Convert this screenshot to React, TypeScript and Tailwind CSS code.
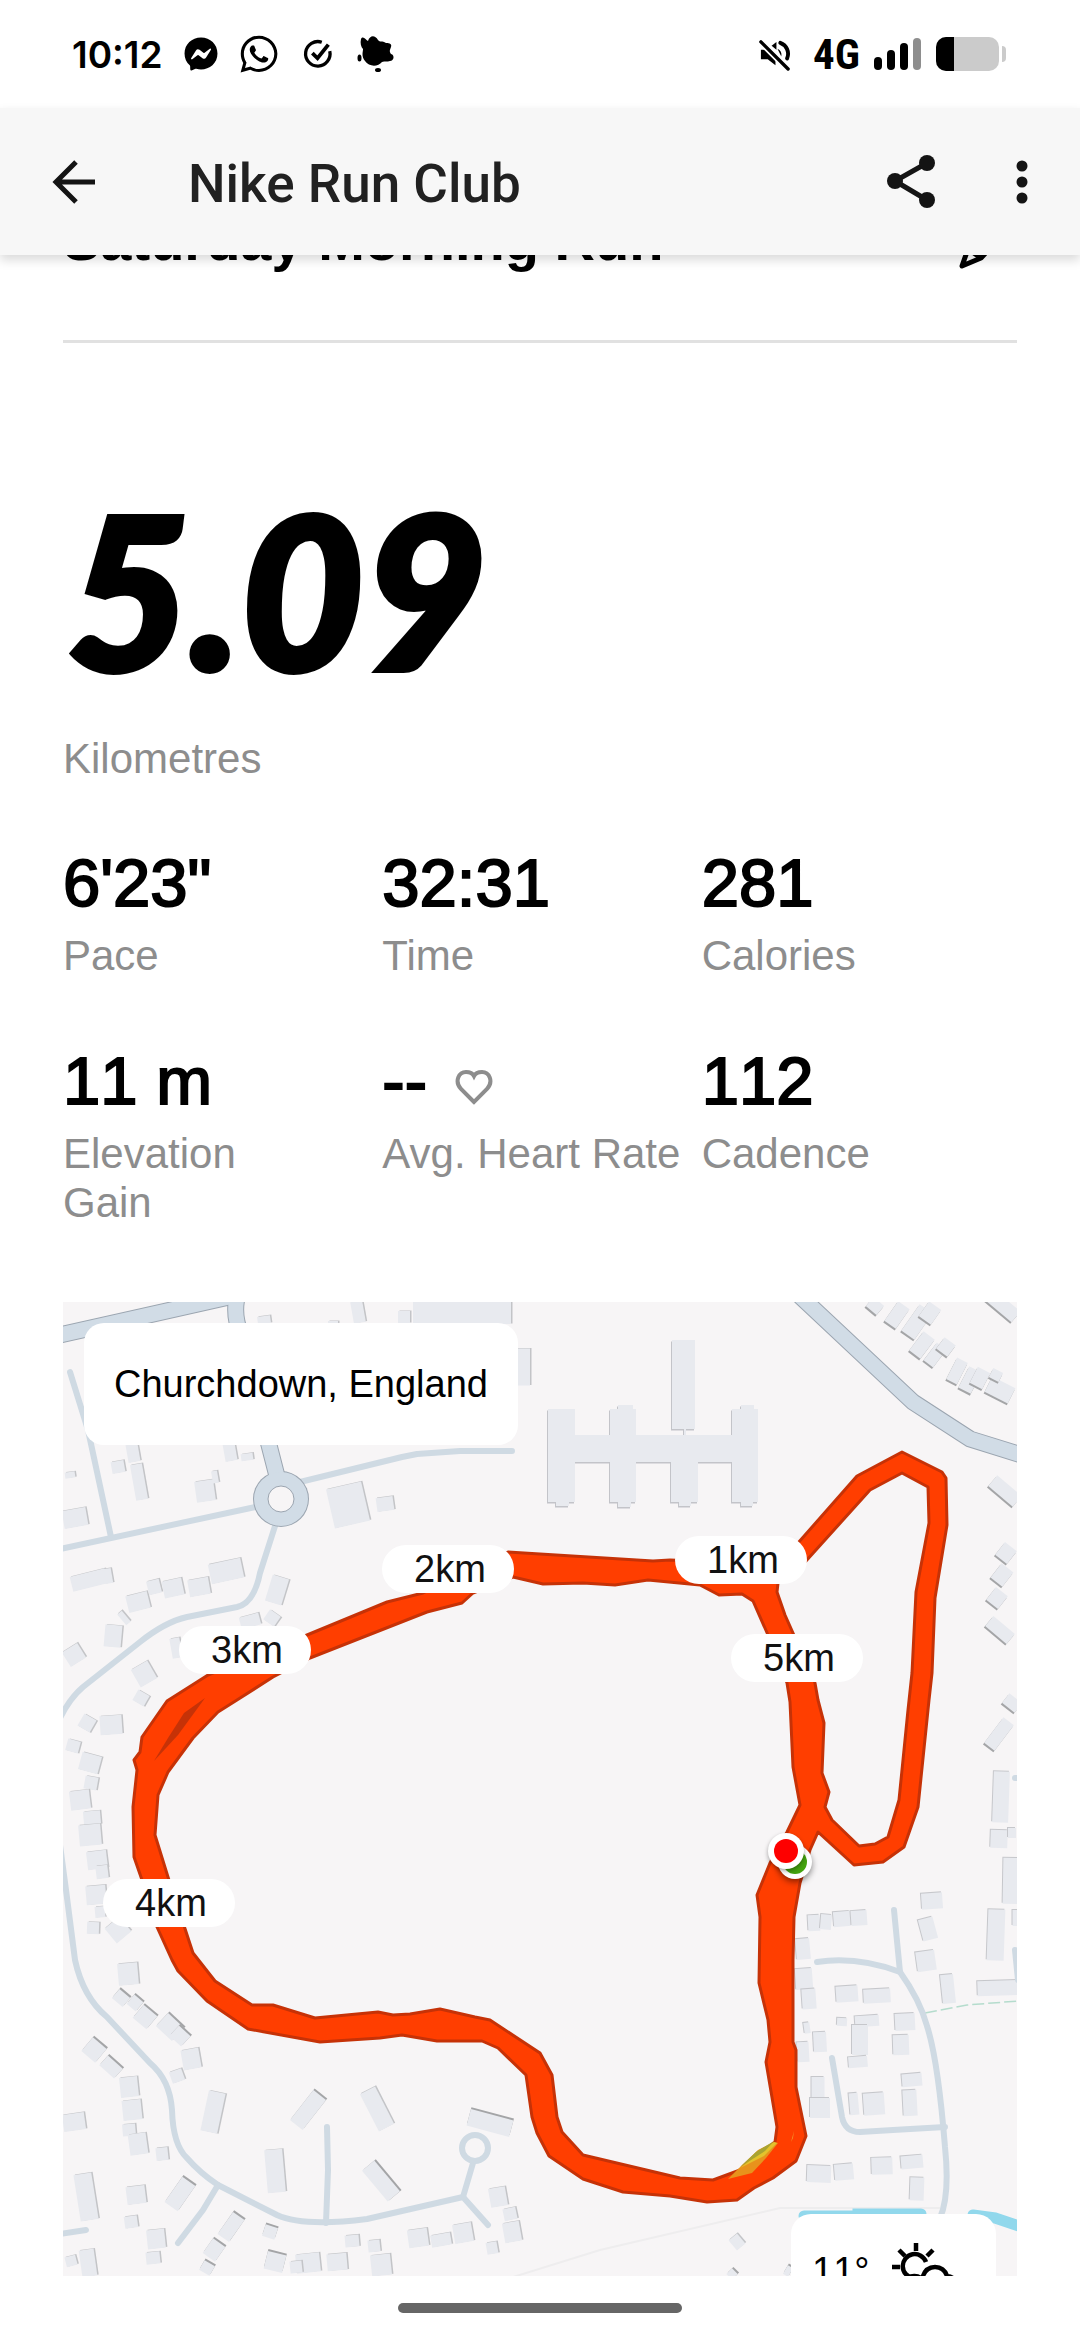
import React from "react";
import { FaFacebookMessenger, FaWhatsapp } from "react-icons/fa";

// x, y (centre), width, height, rotation
type Building = [number, number, number, number, number];

interface Stat {
  value: string;
  label: string;
  heart?: boolean;
  nowrap?: boolean;
}

const stats: Stat[] = [
  { value: "6'23\"", label: "Pace" },
  { value: "32:31", label: "Time" },
  { value: "281", label: "Calories" },
  { value: "11 m", label: "Elevation Gain" },
  { value: "--", label: "Avg. Heart Rate", heart: true, nowrap: true },
  { value: "112", label: "Cadence" },
];

// The map drawing uses this window of world coordinates
const MAP = { x: 63, y: 1302, width: 954, height: 974 };

const splits = [
  { label: "1km", x: 741, y: 1560 },
  { label: "2km", x: 448, y: 1569 },
  { label: "3km", x: 245, y: 1650 },
  { label: "4km", x: 169, y: 1903 },
  { label: "5km", x: 797, y: 1658 },
];

const westBuildings: Building[] = [
  [133, 1453, 12, 18, -10], [118, 1467, 13, 12, -10], [139, 1482, 12, 36, -10],
  [230, 1452, 12, 18, -10], [247, 1457, 12, 7, -8], [205, 1491, 19, 21, -8],
  [215, 1477, 6, 12, -10], [75, 1518, 24, 18, -10], [70, 1475, 10, 6, -8],
  [348, 1505, 36, 40, -13], [385, 1504, 17, 14, -8], [89, 1580, 36, 15, -14],
  [108, 1576, 8, 15, -10], [138, 1602, 22, 17, -14], [154, 1587, 13, 14, -14],
  [173, 1588, 20, 17, -12], [199, 1587, 21, 17, -10], [226, 1571, 33, 20, -12],
  [113, 1636, 17, 22, 5], [124, 1618, 6, 14, -40], [74, 1655, 18, 17, -32],
  [144, 1674, 19, 20, -30], [141, 1698, 13, 12, 30], [277, 1590, 17, 27, 17],
  [272, 1618, 13, 12, 35], [250, 1621, 20, 12, -15], [176, 1648, 10, 20, -10],
  [264, 1320, 13, 8, -8], [358, 1312, 12, 22, -10], [404, 1317, 12, 12, 0],
  [333, 1323, 10, 4, 0], [462, 1312, 98, 24, 0], [523, 1367, 14, 37, 0],
  [87, 1723, 14, 14, 30], [111, 1725, 22, 19, -4], [73, 1746, 13, 12, 15],
  [90, 1763, 20, 18, 15], [91, 1783, 13, 13, 10], [80, 1800, 20, 19, -7],
  [92, 1818, 17, 14, -5], [90, 1835, 22, 21, -5], [97, 1860, 20, 18, -7],
  [102, 1872, 12, 13, -7], [96, 1895, 20, 19, -5], [100, 1912, 10, 11, -5],
  [93, 1928, 12, 12, 2], [118, 1930, 19, 19, -40], [128, 1974, 20, 22, -5],
  [129, 2087, 18, 20, -6], [132, 2110, 19, 20, -6], [129, 2130, 13, 12, -5],
  [138, 2144, 18, 21, -8], [162, 2154, 12, 13, -6], [191, 2059, 18, 20, -10],
  [177, 2076, 13, 12, -20], [74, 2122, 22, 17, -8], [213, 2112, 17, 41, 12],
  [377, 2109, 17, 42, -27], [275, 2171, 18, 43, -5], [86, 2197, 18, 47, -9],
  [136, 2195, 19, 18, -7], [131, 2222, 13, 12, -8], [156, 2239, 18, 19, -6],
  [153, 2258, 14, 12, -6], [308, 2263, 24, 19, -6], [296, 2267, 12, 12, -6],
  [337, 2262, 20, 17, -5], [352, 2241, 14, 12, -5], [374, 2246, 12, 12, -6],
  [381, 2265, 20, 21, -6], [418, 2238, 20, 18, -8], [441, 2240, 20, 12, -10],
  [463, 2233, 19, 19, -10], [498, 2197, 17, 19, -10], [510, 2214, 13, 12, -12],
  [512, 2232, 17, 20, -10], [492, 2248, 11, 12, -10], [71, 2261, 11, 10, -15],
  [88, 2263, 15, 27, -8], [737, 2242, 11, 13, -40],
];

// Diagonal roofs, lit from the south west
const slopedBuildings: Building[] = [
  [121, 1998, 14, 12, 40], [135, 2003, 12, 12, 40], [145, 2017, 18, 17, 40],
  [170, 2027, 22, 18, 43], [180, 2036, 16, 14, 43], [94, 2050, 18, 18, 40],
  [111, 2067, 20, 13, 42], [308, 2110, 16, 38, 38], [490, 2123, 44, 17, 15],
  [381, 2181, 40, 16, 50], [180, 2194, 16, 31, 35], [231, 2227, 14, 27, 35],
  [214, 2250, 15, 18, 35], [207, 2268, 12, 11, 30], [270, 2232, 13, 12, 18],
  [275, 2262, 19, 18, 14], [732, 2274, 8, 8, 45], [788, 2271, 6, 10, 30],
];

const eastBuildings: Building[] = [
  [814, 1923, 12, 16, -3], [826, 1922, 11, 15, 5], [842, 1919, 17, 15, -5],
  [859, 1918, 16, 15, -4], [803, 1949, 14, 21, -5], [804, 1979, 17, 21, -4],
  [809, 1999, 14, 20, -4], [847, 1994, 22, 16, -4], [877, 1996, 27, 14, -3],
  [932, 1901, 21, 16, -4], [928, 1929, 15, 22, -15], [926, 1961, 19, 20, -8],
  [948, 1989, 13, 29, -6], [1000, 1988, 45, 15, -2], [996, 1935, 17, 51, 2],
  [1001, 1797, 16, 51, 2], [999, 1839, 17, 18, 2], [1012, 1833, 8, 10, 0],
  [1012, 1881, 18, 46, 1], [1016, 1918, 7, 16, 0], [807, 2028, 6, 11, -8],
  [803, 2052, 12, 20, -3], [820, 2042, 13, 20, -3], [842, 2022, 10, 8, 3],
  [867, 2021, 24, 11, -4], [860, 2040, 16, 30, 0], [858, 2062, 19, 11, -5],
  [905, 2022, 20, 17, -3], [901, 2045, 16, 20, -2], [818, 2090, 13, 26, 0],
  [820, 2108, 20, 20, 0], [854, 2104, 9, 22, -5], [874, 2104, 21, 22, -4],
  [912, 2080, 20, 13, -5], [910, 2103, 14, 26, -3], [819, 2174, 24, 17, 2],
  [844, 2172, 19, 16, -5], [882, 2166, 21, 17, -2], [912, 2162, 22, 13, -5],
  [917, 2189, 14, 23, 2],
];

const northEastBuildings: Building[] = [
  [875, 1306, 14, 12, 40], [897, 1315, 14, 24, 35], [917, 1322, 16, 32, 35],
  [930, 1313, 15, 18, 35], [922, 1345, 14, 24, 37], [935, 1355, 12, 22, 37],
  [946, 1347, 14, 14, 37], [957, 1371, 12, 24, 27], [970, 1380, 14, 24, 27],
  [980, 1378, 14, 18, 27], [1000, 1390, 26, 17, 27], [996, 1375, 11, 10, 27],
  [1003, 1306, 34, 14, 40], [1005, 1491, 32, 14, 40], [1006, 1553, 15, 16, 38],
  [1002, 1575, 15, 18, 38], [997, 1598, 15, 16, 38], [1000, 1630, 28, 13, 40],
  [1012, 1703, 16, 12, 38], [999, 1734, 13, 32, 37],
];

const schoolPath =
  "M548 1409H575V1435H610V1409H618V1405H633V1409H636V1435H684V1429H672V1340H695V1429H686V1435H732V1409H741V1405H754V1409H758V1502H753V1506H741V1502H732V1462H698V1502H691V1506H679V1502H671V1462H636V1502H631V1507H618V1502H610V1462H575V1502H569V1506H556V1502H548Z";

const minorRoads = [
  "M70 1372L88 1430L111 1537",
  "M60 1549L260 1506",
  "M300 1482L402 1457L417 1454L460 1451H512",
  "M276 1523L260 1573Q254 1603 237 1607L187 1617Q165 1622 140 1642L83 1687Q70 1698 60 1718",
  "M60 1845L66 1890L75 1960Q83 1997 107 2017L150 2063Q170 2080 172 2110Q173 2145 187 2158Q200 2173 218 2185L277 2215Q303 2227 367 2219L463 2197L488 2225",
  "M463 2197L473 2163",
  "M327 2127L328 2170L326 2223",
  "M218 2185L203 2210L178 2243",
  "M60 2234L86 2230",
  "M894 1910L900 1972",
  "M817 1962Q857 1956 900 1972Q920 2000 927 2026Q938 2060 945 2147Q950 2195 940 2218",
  "M832 2058L842 2117Q845 2132 860 2132L893 2130L945 2127",
  "M1015 1950L1018 1980",
  "M1015 1778H1020",
];

const majorRoads = [
  "M55 1336L238 1295",
  "M237 1298Q233 1315 241 1335L269 1445L278 1480",
  "M800 1296L913 1402L970 1439L1025 1456",
];

const routeOuter =
  "M508 1552L540 1554L653 1561L670 1560L720 1562L780 1563L798 1543L857 1476L902 1452L942 1472L946 1478L947 1525L935 1598L932 1673L929 1700L918 1807L904 1847L883 1862L854 1865L818 1832L810 1850L800 1883L794 1917L793 1960V2042L796 2050V2087L806 2136L796 2161L773 2178L754 2188L737 2200L707 2202L670 2196L623 2192L583 2179L549 2156L537 2133L532 2117L526 2075L498 2048L482 2041H437L402 2035L380 2038L320 2042L248 2029L207 2001L178 1971L172 1960L157 1927L142 1880L134 1857L133 1807L137 1770L134 1760L140 1752L142 1737L167 1701L208 1675L307 1635L387 1602L423 1593Z";
const routeInner =
  "M513 1577L543 1584L583 1583L615 1585L648 1580L700 1585L719 1595L742 1594L753 1601L768 1635L787 1683L790 1702L793 1767L800 1805L787 1832L770 1863L757 1895L760 1917L759 1983L768 2020L770 2042L766 2062L777 2127L775 2142L740 2170L713 2180L680 2178L583 2155L562 2132L557 2117L552 2075L540 2053L490 2020L475 2017L440 2009L410 2014L393 2015L378 2012L315 2018L273 2005L252 2005L215 1981L193 1953L168 1877L155 1835L158 1795L168 1772L193 1738L218 1712L237 1700L273 1677L310 1658L427 1612L462 1603L473 1593Z";
const routeEast =
  "M806 1561L870 1490L902 1473L928 1487L929 1523L916 1592L912 1673L908 1710L899 1800L888 1837L875 1844L859 1846L832 1820L825 1807L829 1792L822 1773L824 1723L818 1700L815 1683L793 1633L785 1615L777 1592L778 1583Z";

const Buildings = ({
  items,
  dx,
  dy,
  shade,
}: {
  items: Building[];
  dx: number;
  dy: number;
  shade: string;
}) => (
  <g>
    {items.map(([x, y, w, h, angle]) => (
      <g key={`${x}-${y}`}>
        <rect
          x={x - w / 2 + dx}
          y={y - h / 2 + dy}
          width={w}
          height={h}
          fill={shade}
          transform={`rotate(${angle} ${x} ${y})`}
        />
        <rect
          x={x - w / 2}
          y={y - h / 2}
          width={w}
          height={h}
          fill="#e8eaef"
          transform={`rotate(${angle} ${x} ${y})`}
        />
      </g>
    ))}
  </g>
);

const RouteMap = () => (
  <svg
    className="block w-full h-full"
    viewBox={`${MAP.x} ${MAP.y} ${MAP.width} ${MAP.height}`}
    fill="none"
    role="img"
    aria-label="Route map"
  >
    <path d="M510 2278L600 2250L780 2208H940" stroke="#eeedee" strokeWidth="2" />
    <path d="M925 2013L967 2005L1018 2001" stroke="#b5dccd" strokeWidth="1.5" strokeDasharray="12 4" />
    <path d="M804 2216H858V2214H921M973 2215L995 2218L1022 2227" stroke="#91d8ec" strokeWidth="11" strokeLinecap="round" />

    <Buildings items={westBuildings} dx={1.5} dy={-0.5} shade="#c3c4c7" />
    <Buildings items={slopedBuildings} dx={0} dy={-2} shade="#a4a5a7" />
    <Buildings items={eastBuildings} dx={-1} dy={-1} shade="#c6c7cb" />
    <Buildings items={northEastBuildings} dx={0} dy={2} shade="#a4a5a7" />
    <path d={schoolPath} fill="#c3c4c9" transform="translate(-1 1.5)" />
    <path d={schoolPath} fill="#e8eaef" />

    <g stroke="#cfdae3" strokeWidth="6" strokeLinecap="round" strokeLinejoin="round">
      {minorRoads.map((d) => (
        <path key={d} d={d} />
      ))}
      <circle cx="475" cy="2148" r="13" />
    </g>
    {majorRoads.map((d) => (
      <path key={d} d={d} stroke="#9ba5b0" strokeWidth="17" />
    ))}
    <circle cx="281" cy="1499" r="28" fill="#9ba5b0" />
    {majorRoads.map((d) => (
      <path key={d} d={d} stroke="#d1dce6" strokeWidth="15" />
    ))}
    <circle cx="281" cy="1499" r="27" fill="#d1dce6" />
    <circle cx="281" cy="1499" r="13" fill="#f7f5f6" stroke="#9ba5b0" />

    {/* Pace coloured route */}
    <path
      d={routeOuter + routeInner + routeEast}
      fill="#ff3e00"
      fillRule="evenodd"
      stroke="#c63207"
      strokeWidth="3"
      strokeLinejoin="round"
    />
    <path d="M205 1698L184 1713L168 1738L154 1761L178 1735Z" fill="#c63207" />
    <path d="M774 2142L758 2150L738 2169L728 2179L752 2173L766 2158L778 2143Z" fill="#e8921c" />
    <path d="M774 2142L740 2168L764 2156L777 2143Z" fill="#e3c22c" />
    <path d="M774 2141L756 2152L740 2167L765 2151Z" fill="#a9a432" />
    <path d="M794 2131L791 2142L793 2138Z" fill="#f0982a" />

    {/* Start and finish */}
    <g className="drop-shadow-[0_3px_3px_rgba(0,0,0,0.45)]">
      <circle cx="795" cy="1862" r="17" fill="#fff" />
      <circle cx="795" cy="1862" r="12" fill="#44a30f" />
    </g>
    <g className="drop-shadow-[0_2px_2px_rgba(0,0,0,0.35)]">
      <circle cx="786" cy="1851" r="18" fill="#fff" />
      <circle cx="786" cy="1851" r="12" fill="#fe0000" />
    </g>
  </svg>
);

const StatusBar = () => (
  <div className="flex h-[108px] items-center justify-between bg-white pl-[72px] pr-[74px] text-black">
    <div className="flex items-center">
      <span className="w-[90px] font-[Inter,sans-serif] text-[37px] font-semibold leading-none">
        10:12
      </span>
      <FaFacebookMessenger className="ml-[22px] size-[34px]" />
      <FaWhatsapp className="ml-[20px] size-[42px]" />
      <svg className="ml-[22px] size-[32px]" viewBox="0 0 34 34" fill="none" stroke="currentColor" strokeWidth="3.5">
        <path d="M21 4.500A13 13 0 1 0 29.500 14" />
        <path d="M11 16L16.500 21.500L28 7" strokeWidth="4" />
      </svg>
      <svg className="ml-[23px] size-[38px]" viewBox="0 0 38 38" fill="currentColor">
        <path d="M4 4C6 0 9 5 11 6C13 0 18 0 21 5C23 8 25 5 29 8C33 8 35 9 34 12C33 15 32 16 34 19C38 20 37 26 33 26C30 27 28 26 25 27C21 32 12 32 8 26C4 21 6 17 6 14C4 12 3 8 4 4Z" />
        <ellipse cx="2.500" cy="23" rx="2" ry="3.500" />
        <ellipse cx="21" cy="35" rx="3" ry="2" />
      </svg>
    </div>

    <div className="flex items-center">
      <svg className="size-[33px]" viewBox="0 0 34 34" fill="currentColor">
        <path d="M3 12H10L18 17V28L10 22H3Z" />
        <path d="M14 8L19 4V12Z" />
        <path d="M20 11Q25 13 24 19Z" />
        <path d="M23 5A12 12 0 0 1 30 21" fill="none" stroke="currentColor" strokeWidth="4" strokeLinecap="round" />
        <path d="M3 4L31 32" stroke="#fff" strokeWidth="7" />
        <path d="M3 4L31 32" stroke="currentColor" strokeWidth="3.500" strokeLinecap="round" />
      </svg>
      <span className="ml-[22px] font-['Roboto_Condensed','Liberation_Sans_Narrow',Roboto,sans-serif] text-[43px] font-bold leading-none">
        4G
      </span>
      <div className="ml-[14px] flex h-[32px] items-end gap-[5px]">
        <span className="h-[13px] w-[8px] rounded-full bg-black" />
        <span className="h-[20px] w-[8px] rounded-full bg-black" />
        <span className="h-[27px] w-[8px] rounded-full bg-black" />
        <span className="h-[32px] w-[8px] rounded-full bg-[#8e8e8e]" />
      </div>
      <div className="ml-[15px] flex h-[34px] w-[63px] overflow-hidden rounded-[10px] bg-[#cbcbcb]">
        <span className="w-[18px] bg-black" />
      </div>
      <span className="ml-[3px] h-[16px] w-[4px] rounded-r-full bg-[#cbcbcb]" />
    </div>
  </div>
);

const AppBar = () => (
  <header className="relative z-10 flex h-[147px] items-center bg-[#f7f7f7] pl-12 pr-8 text-[#141414] shadow-[0_5px_10px_rgba(0,0,0,0.15)]">
    <button type="button" aria-label="Back">
      <svg className="size-[52px]" viewBox="0 0 52 52" fill="none" stroke="currentColor" strokeWidth="5">
        <path d="M47 26H9M28 6L8 26L28 46" />
      </svg>
    </button>
    <h1 className="ml-[88px] flex-1 pt-1 font-[Roboto,sans-serif] text-[53px] font-medium leading-[60px] text-[#212121]">
      Nike Run Club
    </h1>
    <button type="button" aria-label="Share">
      <svg className="size-[56px]" viewBox="0 0 56 56" fill="currentColor">
        <path d="M45 9L13 27L45 46" fill="none" stroke="currentColor" strokeWidth="5" />
        <circle cx="13" cy="27" r="8" />
        <circle cx="45" cy="9" r="8" />
        <circle cx="45" cy="46" r="8" />
      </svg>
    </button>
    <button type="button" aria-label="More options" className="ml-[58px]">
      <svg className="size-[52px]" viewBox="0 0 52 52" fill="currentColor">
        <circle cx="26" cy="10" r="5.500" />
        <circle cx="26" cy="26" r="5.500" />
        <circle cx="26" cy="42" r="5.500" />
      </svg>
    </button>
  </header>
);

const App = () => {
  return (
    <div className="flex min-h-screen flex-col bg-white font-['Liberation_Sans',Arial,sans-serif] text-black">
      <StatusBar />
      <AppBar />

      <main className="flex-1 px-[63px]">
        {/* Run title, partly scrolled under the app bar */}
        <div className="-mt-[50px] flex justify-between border-b-[3px] border-[#e1e1e1] pb-[63px]">
          <h2 className="text-[56px] font-bold leading-[72px]">
            Saturday Morning Run
          </h2>
          <button type="button" aria-label="Edit title" className="mr-2">
            <svg className="h-[72px] w-[52px]" viewBox="0 0 52 72" fill="none" stroke="currentColor" strokeWidth="5" strokeLinejoin="round">
              <path d="M5 61L11 44L38 17L48 27L24 53Z" />
              <path d="M11 44L24 53" />
            </svg>
          </button>
        </div>

        <p className="mt-[139px] pl-1 font-[Lato,sans-serif] text-[212px] font-black italic leading-[212px] [-webkit-text-stroke:6px_black]">
          5.09
        </p>
        <p className="mt-[40px] text-[42px] leading-[49px] text-[#8d8d8d]">
          Kilometres
        </p>

        <dl className="mt-[62px] grid grid-cols-3 gap-x-1 gap-y-[63px]">
          {stats.map((stat) => (
            <div key={stat.label} className="flex flex-col-reverse justify-end gap-[10px]">
              <dt
                className={
                  stat.nowrap
                    ? "whitespace-nowrap text-[42px] leading-[49px] text-[#8d8d8d]"
                    : "pr-16 text-[42px] leading-[49px] text-[#8d8d8d]"
                }
              >
                {stat.label}
              </dt>
              <dd className="flex items-center text-[67px] leading-[76px] [font-kerning:none] [-webkit-text-stroke:2px_black]">
                {stat.value}
                {stat.heart && (
                  <svg className="ml-7 mt-3 h-[36px] w-[38px]" viewBox="0 0 38 36" fill="none" stroke="#8d8d8d" strokeWidth="4">
                    <path d="M19 33L6 20C-1 12 4 3 11 3C15 3 18 5 19 7C20 5 23 3 27 3C34 3 39 12 32 20Z" />
                  </svg>
                )}
              </dd>
            </div>
          ))}
        </dl>

        <section className="relative mt-[75px] aspect-[954/974] overflow-hidden bg-[#f7f5f6] text-[38px] [font-kerning:none]">
          <RouteMap />
          {splits.map((split) => (
            <span
              key={split.label}
              className="absolute flex h-12 w-[132px] -translate-x-1/2 -translate-y-1/2 items-center justify-center rounded-full bg-white pl-1 leading-[48px] text-[#111]"
              style={{
                left: `${((split.x - MAP.x) / MAP.width) * 100}%`,
                top: `${((split.y - MAP.y) / MAP.height) * 100}%`,
              }}
            >
              {split.label}
            </span>
          ))}
          <div className="absolute left-[21px] top-[21px] flex h-[122px] items-center rounded-[20px] bg-white px-[30px]">
            Churchdown, England
          </div>
          {/* Weather card continues below the fold */}
          <div className="absolute -bottom-[60px] right-[21px] flex h-[122px] w-[205px] items-center rounded-[20px] bg-white pb-2 pl-[21px]">
            11°
            <svg className="ml-[18px] size-[72px]" viewBox="0 0 72 72" fill="none" stroke="currentColor" strokeWidth="4.5">
              <path d="M29 8V16M12 15L18 21M46 15L40 21M5 32H13" />
              <path d="M26 43A12 12 0 1 1 39 27" />
              <path d="M20 60A10 10 0 0 1 35 44Q38 32 48 32Q57 32 60 41Q69 42 69 51Q69 60 60 60Z" />
            </svg>
          </div>
        </section>
      </main>

      <footer className="flex h-16 items-center justify-center">
        <span className="h-[10px] w-[284px] rounded-full bg-[#666]" />
      </footer>
    </div>
  );
};

export default App;
